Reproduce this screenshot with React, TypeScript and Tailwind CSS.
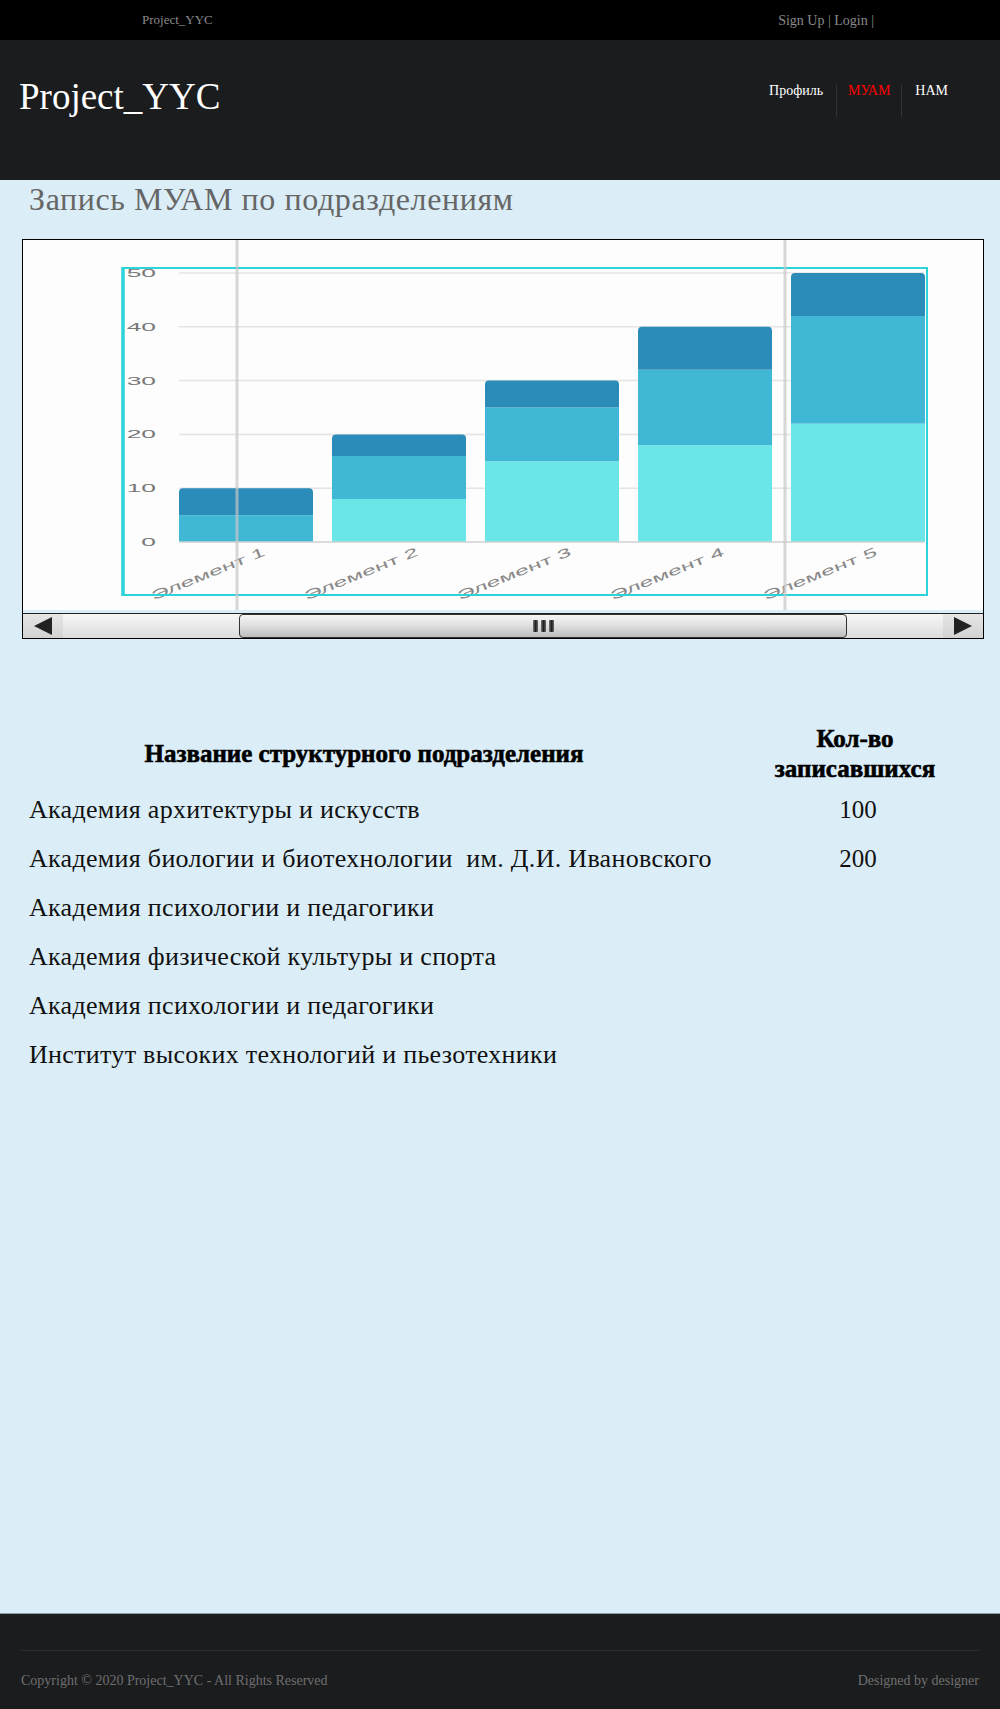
import React from "react"

const serif = { fontFamily: '"Liberation Serif", "Times New Roman", serif' }
const sans = '"Liberation Sans", Arial, sans-serif'

// stacked values: [top of light, top of medium, top of dark]
const bars = [
  [0, 5, 10],
  [8, 16, 20],
  [15, 25, 30],
  [18, 32, 40],
  [22, 42, 50],
]

const y = (v: number) => 302 - 5.38 * v

const Chart = () => {
  return (
    <svg width="960" height="370" className="block">
      <rect x="0" y="0" width="960" height="370" fill="#fdfdfd" />
      {[10, 20, 30, 40, 50].map(v => (
        <line key={v} x1="156" x2="901" y1={y(v)} y2={y(v)} stroke="#e4e4e4" strokeWidth="1.5" />
      ))}
      {bars.map((b, i) => {
        const x = 156 + 153 * i
        const w = 134
        const top = y(b[2])
        return (
          <g key={i}>
            {b[0] > 0 && <rect x={x} y={y(b[0])} width={w} height={y(0) - y(b[0])} fill="#6be6e8" />}
            <rect x={x} y={y(b[1])} width={w} height={y(b[0]) - y(b[1])} fill="#41b7d6" />
            <path
              d={`M${x} ${y(b[1])} L${x} ${top + 4} Q${x} ${top} ${x + 4} ${top} L${x + w - 4} ${top} Q${x + w} ${top} ${x + w} ${top + 4} L${x + w} ${y(b[1])} Z`}
              fill="#2b8bb9"
            />
            <text
              transform={`translate(${x + 87} ${315}) rotate(-22) scale(1.9 1)`}
              textAnchor="end"
              fontFamily={sans}
              fontSize="13"
              fill="#888"
            >
              Элемент {i + 1}
            </text>
          </g>
        )
      })}
      <line x1="156" x2="901" y1={y(0)} y2={y(0)} stroke="#d0d0d0" strokeWidth="1.5" />
      {[0, 10, 20, 30, 40, 50].map(v => (
        <text
          key={v}
          transform={`translate(133 ${y(v) + 4}) scale(2.4 1)`}
          textAnchor="end"
          fontFamily={sans}
          fontSize="11"
          fill="#777"
        >
          {v}
        </text>
      ))}
      <rect x="100" y="28" width="804" height="327" fill="none" stroke="#2cd3d9" strokeWidth="2" />
      <line x1="100" x2="100" y1="27" y2="356" stroke="#2cd3d9" strokeWidth="3.5" />
      <line x1="214" x2="214" y1="0" y2="370" stroke="#c8c8c8" strokeWidth="3" opacity="0.7" />
      <line x1="762" x2="762" y1="0" y2="370" stroke="#c8c8c8" strokeWidth="3" opacity="0.7" />
    </svg>
  )
}

const ScrollBar = () => {
  return (
    <div className="flex h-[25px] border-t border-[#222] bg-gradient-to-b from-[#f7f7f7] to-[#dcdcdc]">
      <div className="flex w-[40px] items-center justify-center bg-gradient-to-b from-[#e6e6e6] to-[#d2d2d2]">
        <div className="h-0 w-0 border-y-[9px] border-r-[18px] border-y-transparent border-r-[#222]" />
      </div>
      <div className="w-[176px]" />
      <div className="flex w-[608px] items-center justify-center rounded-[4px] border border-[#333] bg-gradient-to-b from-[#f6f6f6] via-[#dedede] to-[#bdbdbd]">
        <div className="flex gap-[3px]">
          <div className="h-[12px] w-[5px] rounded-[1px] bg-gradient-to-r from-[#777] via-[#222] to-[#666]" />
          <div className="h-[12px] w-[5px] rounded-[1px] bg-gradient-to-r from-[#777] via-[#222] to-[#666]" />
          <div className="h-[12px] w-[5px] rounded-[1px] bg-gradient-to-r from-[#777] via-[#222] to-[#666]" />
        </div>
      </div>
      <div className="flex-1" />
      <div className="flex w-[40px] items-center justify-center bg-gradient-to-b from-[#e6e6e6] to-[#d2d2d2]">
        <div className="h-0 w-0 border-y-[9px] border-l-[18px] border-y-transparent border-l-[#222]" />
      </div>
    </div>
  )
}

const rows = [
  { name: "Академия архитектуры и искусств", count: "100" },
  { name: "Академия биологии и биотехнологии\u00a0 им. Д.И. Ивановского", count: "200" },
  { name: "Академия психологии и педагогики", count: "" },
  { name: "Академия физической культуры и спорта", count: "" },
  { name: "Академия психологии и педагогики", count: "" },
  { name: "Институт высоких технологий и пьезотехники", count: "" },
]

const App = () => {
  return (
    <div className="flex min-h-screen flex-col overflow-hidden bg-[#dbeef8]" style={serif}>
      <div className="flex h-[40px] items-center justify-between bg-black pl-[142px] pr-[126px] text-[#8a8a8a]">
        <span className="text-[13px]">Project_YYC</span>
        <span className="text-[14px]">Sign Up | Login |</span>
      </div>

      <header className="flex h-[140px] items-start justify-between bg-[#1b1c1e] pl-[19px] pr-[39px]">
        <div className="pt-[38px] text-[37px] leading-none text-white">Project_YYC</div>
        <ul className="flex pt-[45px] text-[14px] leading-[12px]">
          <li className="h-[32px] pr-[13px] text-white">Профиль</li>
          <li className="h-[32px] border-l border-[#333] px-[11px] text-[#ff0000]">МУАМ</li>
          <li className="h-[32px] border-l border-[#333] pl-[13px] pr-[13px] text-white">НАМ</li>
        </ul>
      </header>

      <main className="flex-1 px-[22px] pt-[3px]">
        <h2 className="pl-[7px] text-[32px] leading-none tracking-[0.6px] text-[#666]">Запись МУАМ по подразделениям</h2>

        <div className="mt-[24px] w-[962px] border border-black bg-white">
          <Chart />
          <div className="h-[3px] bg-[#dbeef8]" />
          <ScrollBar />
        </div>

        <table className="ml-[-8px] mt-[83px] w-[982px] table-fixed border-collapse">
          <thead>
            <tr className="h-[63px]">
              <th className="w-[700px] text-center text-[25px] font-bold leading-[30px] text-black [-webkit-text-stroke:0.6px_#000]">
                Название структурного подразделения
              </th>
              <th className="w-[282px] text-center text-[25px] font-bold leading-[30px] text-black [-webkit-text-stroke:0.6px_#000]">
                Кол-во
                <br />
                записавшихся
              </th>
            </tr>
          </thead>
          <tbody>
            {rows.map((row, i) => (
              <tr key={i} className="h-[49px]">
                <td className="whitespace-nowrap pl-[15px] text-left text-[26px] tracking-[0.3px] text-[#111]">{row.name}</td>
                <td className="pl-[6px] text-center text-[25px] text-[#111]">{row.count}</td>
              </tr>
            ))}
          </tbody>
        </table>
      </main>

      <footer className="h-[96px] border-t border-[#8e9ea8] bg-[#1b1c1e] px-[21px] pt-[36px]">
        <div className="border-t border-[#2c2d30]" />
        <div className="flex items-center justify-between pt-[23px] text-[14px] leading-none text-[#6f6f6f]">
          <span>Copyright © 2020 Project_YYC - All Rights Reserved</span>
          <span>Designed by designer</span>
        </div>
      </footer>
    </div>
  )
}

export default App
